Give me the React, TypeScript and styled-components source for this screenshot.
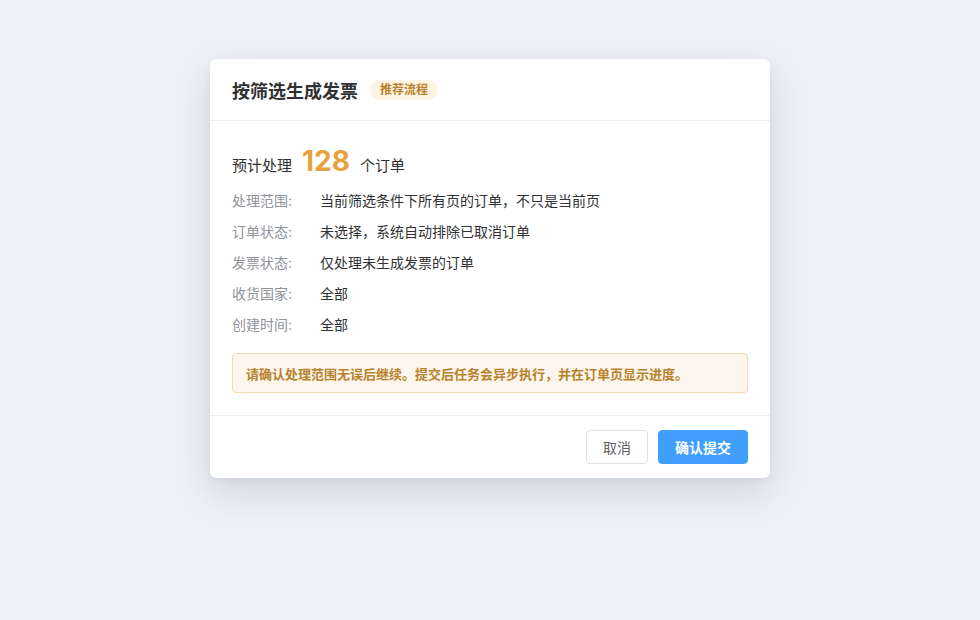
import styled, { createGlobalStyle } from 'styled-components'

const GlobalStyle = createGlobalStyle`
  html, body {
    margin: 0;
    padding: 0;
    background: #eef1f6;
    font-family: "Inter", "Noto Sans CJK SC", sans-serif;
    color: #303133;
  }
`

const rows = [
  {label: '处理范围:', value: '当前筛选条件下所有页的订单，不只是当前页'},
  {label: '订单状态:', value: '未选择，系统自动排除已取消订单'},
  {label: '发票状态:', value: '仅处理未生成发票的订单'},
  {label: '收货国家:', value: '全部'},
  {label: '创建时间:', value: '全部'},
]

export default function App() {
  return (
    <Page>
      <GlobalStyle />
      <Dialog>
        <Header>
          <Title>按筛选生成发票</Title>
          <Badge>推荐流程</Badge>
        </Header>

        <Body>
          <Summary>
            <span>预计处理</span>
            <Count>128</Count>
            <span>个订单</span>
          </Summary>

          <List>
            {rows.map(r => (
              <Row key={r.label}>
                <Label>{r.label}</Label>
                <Value>{r.value}</Value>
              </Row>
            ))}
          </List>

          <Notice>请确认处理范围无误后继续。提交后任务会异步执行，并在订单页显示进度。</Notice>
        </Body>

        <Footer>
          <Button>取消</Button>
          <Button primary>确认提交</Button>
        </Footer>
      </Dialog>
    </Page>
  )
}

const Page = styled.div`
  width: 980px;
  height: 620px;
  display: flex;
  justify-content: center;
  align-items: flex-start;
  padding-top: 59px;
  box-sizing: border-box;
`

const Dialog = styled.div`
  width: 560px;
  background: #fff;
  border-radius: 6px;
  box-shadow: 0 14px 36px rgba(30, 40, 70, 0.14), 0 2px 6px rgba(30, 40, 70, 0.06);
`

const Header = styled.div`
  height: 62px;
  box-sizing: border-box;
  padding: 0 22px;
  display: flex;
  align-items: center;
  gap: 12px;
  border-bottom: 1px solid #ebeef5;
`

const Title = styled.h2`
  margin: 0;
  font-size: 18px;
  font-weight: 700;
  color: #303133;
`

const Badge = styled.span`
  height: 20px;
  line-height: 20px;
  padding: 0 10px;
  border-radius: 10px;
  background: #fdf3e3;
  color: #b8822c;
  font-size: 12px;
  font-weight: 700;
`

const Body = styled.div`
  padding: 22px 22px 22px;
  border-bottom: 1px solid #ebeef5;
`

const Summary = styled.div`
  height: 36px;
  display: flex;
  align-items: baseline;
  gap: 10px;
  font-size: 15px;
  line-height: 36px;
  color: #303133;
  margin-bottom: 11px;
`

const Count = styled.span`
  font-size: 28px;
  font-weight: 700;
  color: #e6a23c;
  line-height: 36px;
`

const List = styled.div`
  display: flex;
  flex-direction: column;
  gap: 9px;
`

const Row = styled.div`
  display: flex;
  line-height: 22px;
  font-size: 14px;
`

const Label = styled.span`
  width: 88px;
  flex-shrink: 0;
  color: #909399;
`

const Value = styled.span`
  color: #303133;
`

const Notice = styled.div`
  margin-top: 17px;
  height: 40px;
  box-sizing: border-box;
  display: flex;
  align-items: center;
  padding: 0 13px;
  background: #fdf6ec;
  border: 1px solid #f3d9ae;
  border-radius: 4px;
  color: #b8822c;
  font-size: 13px;
  font-weight: 700;
`

const Footer = styled.div`
  display: flex;
  justify-content: flex-end;
  gap: 10px;
  padding: 14px 22px;
`

const Button = styled.button<{primary?: boolean}>`
  height: 34px;
  padding: 0 16px;
  border-radius: 4px;
  font-family: inherit;
  font-size: 14px;
  font-weight: ${p => p.primary ? 700 : 400};
  cursor: pointer;
  border: 1px solid ${p => p.primary ? '#409eff' : '#dcdfe6'};
  background: ${p => p.primary ? '#409eff' : '#fff'};
  color: ${p => p.primary ? '#fff' : '#606266'};
`
